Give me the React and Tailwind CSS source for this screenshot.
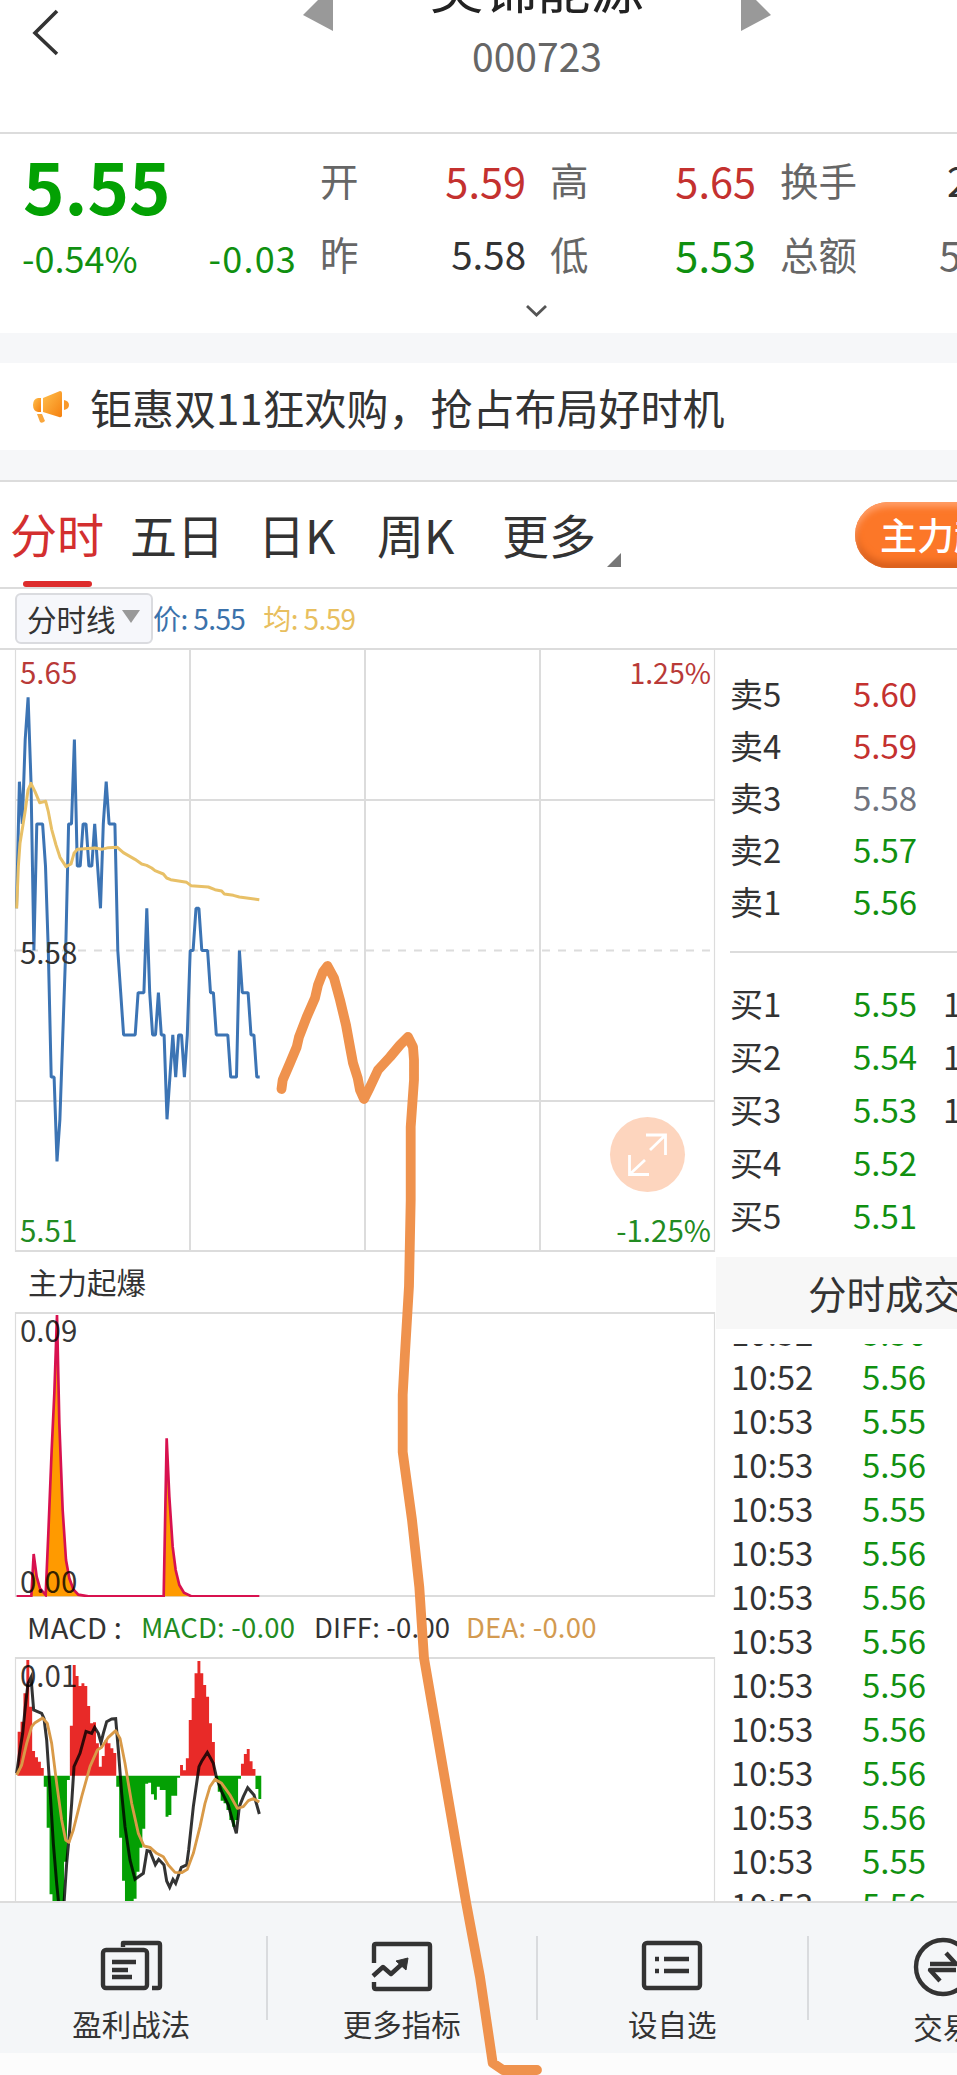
import React from 'react';

const prices = [
  5.59, 5.62, 5.61, 5.63, 5.64, 5.62, 5.58, 5.61, 5.61, 5.61, 5.6, 5.58, 5.55, 5.55, 5.53, 5.54, 5.56,
  5.58, 5.61, 5.61, 5.63, 5.6, 5.6, 5.61, 5.61, 5.6, 5.6, 5.61, 5.6, 5.59, 5.61, 5.62, 5.61, 5.61, 5.61,
  5.58, 5.57, 5.56, 5.56, 5.56, 5.56, 5.56, 5.57, 5.57, 5.57, 5.59, 5.57, 5.56, 5.56, 5.57, 5.56, 5.56,
  5.54, 5.55, 5.56, 5.55, 5.56, 5.56, 5.55, 5.56, 5.58, 5.58, 5.59, 5.59, 5.58, 5.58, 5.58, 5.57, 5.57,
  5.56, 5.56, 5.56, 5.56, 5.56, 5.55, 5.55, 5.55, 5.58, 5.57, 5.57, 5.57, 5.56, 5.56, 5.55, 5.55,
];

// heights of the MACD columns, positive is up
const macdBars = [
  132, 162, 247, 347, 207, 74, 55, 42, 23,
  -33, -156, -356, -380, -380, -380, -380, -258, -13,
  150, 332, 299, 269, 277, 269, 209, 157, 160, 97, 27, 59, 107, 97, 82, 68,
  -33, -186, -315, -380, -380, -380, -369, -288, -216, -159, -24, -21, -56, -72, -33, -43, -43, -123, -118, -60, -60, -6,
  32, 16, 52, 167, 233, 307, 344, 307, 272, 237, 157, 101,
  -18, -48, -75, -83, -103, -133, -153, -133, -9,
  36, 65, 80, 43, 20,
  -40, -70,
];

// neighbouring columns touch, so each colour is one stepped shape
const stepPath = (heights) =>
  `M53 557 ${heights.map((h, i) => `V${557 - h} H${(53 + (i + 1) * 8.7).toFixed(1)}`).join(' ')} V557 Z`;

const sells = [
  { name: '卖5', price: '5.60', color: 'text-[#c4312f]' },
  { name: '卖4', price: '5.59', color: 'text-[#c4312f]' },
  { name: '卖3', price: '5.58', color: 'text-[#70747e]' },
  { name: '卖2', price: '5.57', color: 'text-[#109010]' },
  { name: '卖1', price: '5.56', color: 'text-[#109010]' },
];

const buys = [
  { name: '买1', price: '5.55', qty: '1' },
  { name: '买2', price: '5.54', qty: '1' },
  { name: '买3', price: '5.53', qty: '1' },
  { name: '买4', price: '5.52' },
  { name: '买5', price: '5.51' },
];

const trades = [
  ['10:52', '5.56'],
  ['10:52', '5.56'],
  ['10:53', '5.55'],
  ['10:53', '5.56'],
  ['10:53', '5.55'],
  ['10:53', '5.56'],
  ['10:53', '5.56'],
  ['10:53', '5.56'],
  ['10:53', '5.56'],
  ['10:53', '5.56'],
  ['10:53', '5.56'],
  ['10:53', '5.56'],
  ['10:53', '5.55'],
  ['10:53', '5.56'],
];

const Header = () => (
  <header className="h-[134px] border-b-2 border-[#dcdcdc] flex items-start">
    <svg className="w-[303px] h-[70px] shrink-0" viewBox="0 0 303 70" fill="none" stroke="#333" strokeWidth="3.6">
      <path d="M57 11 L35 33 L57 54" />
    </svg>
    <svg className="w-[30px] h-[31px]" viewBox="0 0 30 31">
      <path d="M30 -15 V31 L0 15 Z" fill="#999" />
    </svg>
    <div className="w-[408px] flex flex-col items-center">
      <h1 className="-mt-[48px] h-[73px] leading-[68px] text-[53.5px] text-[#222]">美锦能源</h1>
      <p className="h-[60px] leading-[60px] text-[39px] text-[#666]">000723</p>
    </div>
    <svg className="w-[30px] h-[31px]" viewBox="0 0 30 31">
      <path d="M0 -15 V31 L30 15 Z" fill="#999" />
    </svg>
  </header>
);

const QuoteCell = ({ label, value, color, size = 'text-[41.5px]' }) => (
  <div className="w-[206px] flex items-center justify-between">
    <span className="text-[38.5px] text-[#666]">{label}</span>
    <span className={`${size} ${color}`}>{value}</span>
  </div>
);

const Quote = () => (
  <section className="h-[199px]">
    <div className="h-[166px] flex">
      <div className="w-[320px] pl-[22px] pr-[23px] shrink-0 text-[#109010]">
        <div className="ml-[1px] h-[101px] leading-[101px] text-[70.5px] font-bold text-[#03a103]">5.55</div>
        <div className="h-[44px] leading-[44px] flex justify-between text-[36px]">
          <span>-0.54%</span>
          <span className="tracking-[1.2px]">-0.03</span>
        </div>
      </div>
      <div className="flex flex-col pt-[9px] shrink-0">
        <div className="flex gap-6 h-[74px]">
          <QuoteCell label="开" value="5.59" color="text-[#c4312f]" />
          <QuoteCell label="高" value="5.65" color="text-[#c4312f]" />
          <div className="flex items-center text-[38.5px] text-[#666]">
            换手<span className="ml-[90px] text-[40px] text-[#333]">2</span>
          </div>
        </div>
        <div className="flex gap-6 h-[74px]">
          <QuoteCell label="昨" value="5.58" color="text-[#333]" size="text-[38.5px]" />
          <QuoteCell label="低" value="5.53" color="text-[#109010]" />
          <div className="flex items-center text-[38.5px] text-[#666]">
            总额<span className="ml-[82px] text-[40px]">5</span>
          </div>
        </div>
      </div>
    </div>
    <svg className="ml-[524px] w-[26px] h-[20px]" viewBox="0 0 26 20" fill="none" stroke="#555" strokeWidth="2.8">
      <path d="M3 6 L12.5 15 L22 6" />
    </svg>
  </section>
);

const Notice = () => (
  <section className="border-y-[30px] border-[#f6f7f9] h-[147px] flex items-center">
    <svg className="ml-[32px] w-[38px] h-[34px] shrink-0" viewBox="0 0 38 34">
      <defs>
        <linearGradient id="horn" x1="0" y1="0" x2="1" y2="1">
          <stop offset="0" stopColor="#ffc04d" />
          <stop offset="1" stopColor="#f5800f" />
        </linearGradient>
      </defs>
      <path d="M9 8 V22 H6 Q1 21 1 15 Q1 9 6 8 Z" fill="url(#horn)" />
      <path d="M11 8 L28 1 Q30 1 30 3 V26 Q29 28 27 27 L11 22 Z" fill="url(#horn)" />
      <path d="M32 10 Q37 11 37 15 Q37 19 32 20 Z" fill="#f99a2c" />
      <path d="M5 24 L10 24 L13 31 Q10 34 8 32 Z" fill="#f9a63c" />
    </svg>
    <span className="ml-[20px] text-[42px] leading-[60px] text-[#333] whitespace-nowrap">钜惠双11狂欢购，抢占布局好时机</span>
  </section>
);

const Tabs = () => (
  <nav className="h-[109px] border-y-2 border-[#dcdcdc] flex text-[47px] leading-[104px] text-[#333] whitespace-nowrap">
    <div className="w-[94px] ml-[10px] h-[105px] shrink-0 flex flex-col items-center text-[#d32f2f]">
      <span className="h-[99px] leading-[102px]">分时</span>
      <i className="w-[69px] h-[6px] rounded-full bg-[#dd2c2c]" />
    </div>
    <span className="ml-[26px] w-[128px] shrink-0">五日</span>
    <span className="w-[119px] shrink-0">日K</span>
    <span className="w-[125px] shrink-0">周K</span>
    <span className="w-[105px] shrink-0">更多</span>
    <svg className="mt-[71px] w-[14px] h-[14px] shrink-0" viewBox="0 0 14 14">
      <path d="M14 0 V14 H0 Z" fill="#777" />
    </svg>
    <div className="ml-[234px] mt-[20px] w-[240px] h-[66px] shrink-0 rounded-full bg-[#fc7728] shadow-[inset_0_5px_6px_#ff9e68,inset_0_-6px_7px_#d85f1d] pl-[25px] text-[37px] leading-[64px] font-medium text-white">
      主力起爆
    </div>
  </nav>
);

const PriceChart = () => {
  const line = prices.map((p, i) => `${(16.5 + i * 2.895).toFixed(1)},${(950.5 - (p - 5.58) * 4220).toFixed(1)}`).join(' ');
  return (
    <svg className="block w-[716px] h-[604px]" viewBox="0 648 716 604">
      <g stroke="#dcdcdc" strokeWidth="2" fill="none">
        <path d="M15.5 649 V1252 M714.5 649 V1252" strokeWidth="1.2" />
        <path d="M15 800 H715 M15 1101 H715 M15 1251 H715 M190 650 V1251 M365 650 V1251 M540 650 V1251" />
        <path d="M14 950.5 H712" strokeDasharray="8 8" />
      </g>
      <polyline points={line} fill="none" stroke="#3c74b4" strokeWidth="3" strokeLinejoin="bevel" />
      <polyline
        transform="translate(0 640) scale(0.33333)"
        fill="none"
        stroke="#e8c067"
        strokeWidth="9"
        strokeLinejoin="round"
        points="50,805 55,680 60,610 68,560 76,510 84,450 93,430 105,455 119,488 137,484 145,515 155,568 168,615 180,652 198,680 213,672 222,640 232,628 285,624 305,628 325,623 352,622 370,638 405,658 425,672 440,676 455,684 465,692 490,702 500,714 512,719 560,727 573,737 625,741 645,749 665,753 673,762 700,766 718,771 778,779"
      />
      <g fontSize="29.5">
        <text x="20" y="684" fill="#b93a38">5.65</text>
        <text x="711" y="684" textAnchor="end" fontSize="28.5" fill="#b93a38">1.25%</text>
        <text x="20" y="964" fill="#333">5.58</text>
        <text x="20" y="1242" fill="#228b22">5.51</text>
        <text x="711" y="1242" textAnchor="end" fill="#228b22">-1.25%</text>
      </g>
      <circle cx="647.5" cy="1154.5" r="37.5" fill="#fdd5be" />
      <path d="M646 1135 H665.5 V1155 M665 1135.5 L650 1150 M629.5 1155 V1174.5 H649 M630 1174 L645 1160" fill="none" stroke="#fff" strokeWidth="2.8" />
    </svg>
  );
};

const BurstChart = () => (
  <svg className="block w-[716px] h-[286px]" viewBox="0 1311 716 286">
    <path d="M15 1313 H715 M15 1596 H715" stroke="#dcdcdc" strokeWidth="2" />
    <path d="M15.5 1312 V1597 M714.5 1312 V1597" stroke="#dcdcdc" strokeWidth="1.2" />
    <path
      transform="translate(0 1250) scale(0.33333)"
      fill="#ff9a00"
      stroke="#d8114f"
      strokeWidth="8"
      d="M50 1039 H94 L101 912 L110 980 L120 1015 L137 1035 L145 850 L155 600 L163 430 L171 195 L178 520 L188 780 L198 930 L208 985 L220 1018 L235 1034 L265 1039 H491 L500 565 L508 740 L518 890 L527 960 L538 1005 L552 1028 L575 1039 H778"
    />
    <g fontSize="29.5" fill="#000" fillOpacity="0.8">
      <text x="20" y="1342">0.09</text>
      <text x="20" y="1593">0.00</text>
    </g>
  </svg>
);

const MacdChart = () => (
  <svg className="block w-[716px] h-[244px]" viewBox="0 1657 716 244">
    <path d="M15 1658 H715" stroke="#dcdcdc" strokeWidth="2" />
    <path d="M15.5 1657 V1902 M714.5 1657 V1902" stroke="#dcdcdc" strokeWidth="1.2" />
    <g transform="translate(0 1590) scale(0.33333)">
      <path d={stepPath(macdBars.map((h) => Math.max(h, 0)))} fill="#e82a28" />
      <path d={stepPath(macdBars.map((h) => Math.min(h, 0)))} fill="#04a004" />
      <polyline
        fill="none"
        stroke="#000"
        strokeOpacity="0.8"
        strokeWidth="9"
        points="50,550 60,480 68,430 76,350 84,280 93,262 101,360 125,370 132,385 140,450 150,600 160,760 170,880 176,940 192,940 200,820 207,745 215,640 222,530 240,490 258,424 275,430 284,412 295,430 303,458 310,430 320,395 335,387 347,386 355,480 365,610 375,710 390,810 405,868 430,850 441,782 450,784 466,824 476,808 492,825 500,873 509,892 519,868 527,880 544,832 560,825 566,780 580,650 597,530 606,512 622,487 640,520 650,565 665,605 685,645 697,690 709,730 718,650 730,620 743,593 762,615 778,672"
      />
      <polyline
        fill="none"
        stroke="#d99a48"
        strokeWidth="8.5"
        strokeLinejoin="round"
        points="50,555 65,525 80,460 95,410 105,398 128,384 142,400 155,460 170,580 185,690 197,750 207,757 220,720 245,620 270,530 292,480 305,472 325,442 347,422 360,445 375,520 395,640 415,730 432,768 450,772 470,790 490,800 505,825 525,847 545,848 562,838 580,790 600,710 615,640 630,590 645,568 665,580 690,615 712,655 730,650 745,632 760,626 778,636"
      />
    </g>
    <text x="20" y="1687" fontSize="29.5" fill="#000" fillOpacity="0.8">0.01</text>
  </svg>
);

const OrderBook = () => (
  <aside className="w-[242px] h-[1251px] -ml-[1px] flex flex-col text-[33px] text-[#333] overflow-hidden whitespace-nowrap">
    <div className="ml-[15px] h-[303px] pt-[17px] border-b-2 border-[#dcdcdc] shrink-0">
      {sells.map((s) => (
        <div key={s.name} className="h-[52px] leading-[52px] flex">
          <span className="w-[123px] shrink-0">{s.name}</span>
          <span className={s.color}>{s.price}</span>
        </div>
      ))}
    </div>
    <div className="ml-[15px] h-[304px] pt-[24px] shrink-0">
      {buys.map((b) => (
        <div key={b.name} className="h-[53px] leading-[53px] flex">
          <span className="w-[123px] shrink-0">{b.name}</span>
          <span className="w-[90px] shrink-0 text-[#109010]">{b.price}</span>
          <span>{b.qty}</span>
        </div>
      ))}
    </div>
    <h2 className="ml-[1px] h-[72px] leading-[70px] pl-[92px] bg-[#f7f7f7] text-[38.5px] shrink-0">分时成交</h2>
    <div className="mt-[15px] flex-1 overflow-hidden">
      <div className="-mt-[34px] pl-[16px]">
        {trades.map(([time, price], i) => (
          <div key={i} className="h-[44px] leading-[45px] flex">
            <span className="w-[131px]">{time}</span>
            <span className="text-[#109010]">{price}</span>
          </div>
        ))}
      </div>
    </div>
  </aside>
);

const NavItem = ({ label, children, last }) => (
  <div className="w-[270.5px] shrink-0 flex">
    <div className="flex-1 pt-[32px] flex flex-col items-center">
      <svg className="w-[64px] h-[64px]" viewBox="0 0 64 64" fill="none" stroke="#333" strokeWidth="4.4" strokeLinejoin="round">
        {children}
      </svg>
      <span className={`text-[29.5px] leading-[40px] text-[#333] ${last ? 'mt-[7px]' : 'mt-[4px]'}`}>{label}</span>
    </div>
    <i className="w-[2px] h-[84px] mt-[33px] bg-[#d9dbde]" />
  </div>
);

const BottomNav = () => (
  <footer className="h-[152px] border-t-2 border-[#dcdcdc] bg-[#f4f6f8] flex">
    <div className="-ml-[3px] flex">
      <NavItem label="盈利战法">
        <rect x="4" y="15" width="44" height="38" rx="3" />
        <path d="M24 12 V8 H59 Q61 8 61 10 V51 Q61 53 59 53 H53" />
        <path d="M13 27 H37 M13 35 H29 M13 42 H33" />
      </NavItem>
      <NavItem label="更多指标">
        <path d="M4 28 V11 Q4 9 6 9 H58 Q60 9 60 11 V52 Q60 54 58 54 H6 Q4 54 4 52 V47" />
        <path d="M3 41 L13 32 L21 39 L32 29" />
        <path d="M26 26 L38 23 L36 35 Z" fill="#333" strokeWidth="1" />
      </NavItem>
      <NavItem label="设自选">
        <rect x="4" y="8" width="56" height="45" rx="3" />
        <path d="M15 24 H19 M24 24 H49 M15 36 H19 M24 36 H49" />
      </NavItem>
      <NavItem label="交易" last>
        <circle cx="32" cy="32" r="27" />
        <path d="M19 29 H45 L35 18 M45 35 H19 L29 46" />
      </NavItem>
    </div>
  </footer>
);

const App = () => (
  <div
    lang="zh-CN"
    className="relative w-[957px] h-[2075px] overflow-hidden bg-white font-['Noto_Sans_CJK_SC',sans-serif]"
  >
    <Header />
    <Quote />
    <Notice />
    <Tabs />

    <div className="h-[59px] pl-[15px] pb-[1px] flex items-center text-[28px] leading-[40px] whitespace-nowrap">
      <div className="w-[138px] h-[51px] border-2 border-[#dadbdf] rounded-md bg-[#f6f7fb] flex items-center pl-[10px] text-[29.5px] text-[#333]">
        分时线
        <svg className="ml-[6px] -mt-[4px] w-[18px] h-[13px]" viewBox="0 0 18 13">
          <path d="M0 0 H18 L9 13 Z" fill="#999" />
        </svg>
      </div>
      <span className="text-[#3b72ab] tracking-[-0.6px]">价: 5.55</span>
      <span className="ml-[18px] text-[#e8bf5f] tracking-[-0.6px]">均: 5.59</span>
    </div>

    <div className="h-[1253px] border-t-2 border-[#dcdcdc] flex">
      <main className="w-[716px] shrink-0">
        <div className="-mt-[2px]">
          <PriceChart />
        </div>
        <h3 className="h-[59px] pl-[28px] text-[29.5px] leading-[59px] text-[#333]">主力起爆</h3>
        <BurstChart />
        <div className="h-[60px] pl-[27px] flex leading-[59px] text-[27.5px] tracking-[0.2px] text-[#333] whitespace-nowrap">
          <span className="w-[114px] text-[29px]">MACD :</span>
          <span className="w-[173px] text-[#228b22]">MACD: -0.00</span>
          <span className="w-[152px]">DIFF: -0.00</span>
          <span className="text-[#d39a50]">DEA: -0.00</span>
        </div>
        <MacdChart />
      </main>
      <OrderBook />
    </div>

    <BottomNav />
    <div className="h-[22px] bg-[#fcfcfc]" />

    {/* freehand forecast drawn over the page */}
    <svg className="absolute left-0 top-0 w-[957px] h-[2075px] pointer-events-none" viewBox="0 0 957 2075">
      <polyline
        fill="none"
        stroke="#ef924d"
        strokeWidth="9.8"
        strokeLinecap="round"
        strokeLinejoin="round"
        points="281.5,1089 282.7,1080 290,1063 296.7,1047 299,1037 306.7,1017 315,998 318,985 323,972 327.5,966 334,978 340,1000 346,1025 350,1047 353,1063 357.7,1078 360,1090 364,1099 370,1087 378,1070 390,1057 400,1045 408,1037 413,1047 414,1060 414,1080 410.7,1127 410.7,1200 409,1286 405,1353 402.7,1395 402.7,1452 412,1520 419.3,1587 424,1658 466,1902 480,1977 492.7,2063 503,2070 537,2070"
      />
    </svg>
  </div>
);

export default App;
